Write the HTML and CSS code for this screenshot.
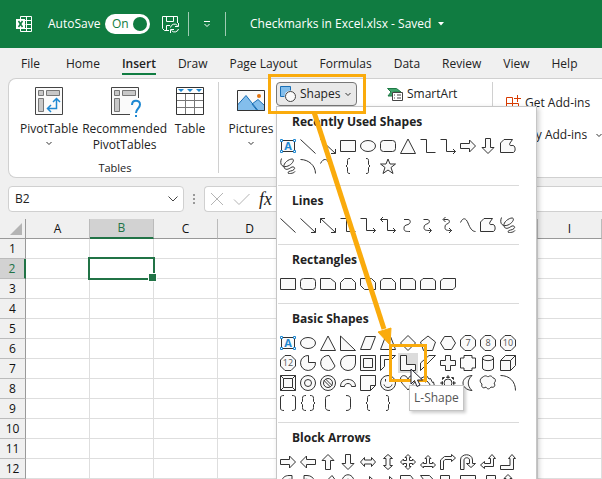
FILE: index.html
```
<!DOCTYPE html>
<html lang="en">
<head>
	<meta charset="UTF-8">
	<meta name="viewport" content="width=device-width, initial-scale=1.0">
	<title>Checkmarks in Excel.xlsx</title>
	<link rel="stylesheet" href="styles.css">
</head>
<body>
	<header class="titlebar">
		<svg class="logo" viewBox="0 0 16 16"><path d="M4.500 3.500V.5h11v15h-11v-3M4.500 4.500h11M9.500 8.500h6M4.500 12.500h11M10.500.5v15" fill="none" stroke="#fff"/><rect y="3" width="9" height="10" fill="#fff"/><path d="M2.500 5l4 6M6.500 5l-4 6" stroke="#107c41" stroke-width="1.500"/></svg>
		<label class="autosave" for="autosave">AutoSave</label>
		<span class="toggle">
			<input type="checkbox" id="autosave" checked>
			<span class="toggle-text">On</span>
		</span>
		<button class="title-btn save" aria-label="Save"><svg viewBox="0 0 17 17"><path d="M7 14.500H2.500l-2-2V.5h15V7M4.500.5v5h7v-5M4.500 14.500v-5H8M8.500 11.500a4 4 0 0 1 7-2M16.500 7v3.500H13M16.500 13a4 4 0 0 1-7 1.500M8.500 17v-3.500H12"/></svg></button>
		<span class="title-sep"></span>
		<button class="title-btn more" aria-label="Customize Quick Access Toolbar"><svg viewBox="0 0 8 8"><path d="M1 1.500h6M1.500 4L4 6.500 6.500 4"/></svg></button>
		<span class="title-sep"></span>
		<span class="filename">Checkmarks in Excel.xlsx - Saved</span>
		<svg class="caret" viewBox="0 0 6 4"><path d="M0 0h6L3 3.500z" fill="#fff"/></svg>
	</header>

	<nav class="tabs">
		<a href="#" class="file">File</a>
		<a href="#">Home</a>
		<a href="#" class="active">Insert</a>
		<a href="#">Draw</a>
		<a href="#">Page Layout</a>
		<a href="#">Formulas</a>
		<a href="#">Data</a>
		<a href="#">Review</a>
		<a href="#">View</a>
		<a href="#">Help</a>
	</nav>

	<section class="ribbon">
		<div class="group tables">
			<div class="group-items">
				<button class="big-btn">
					<svg viewBox="0 0 28 28"><path d="M.5.5h27v27H.5z" fill="#fafafa" stroke="#444"/><path d="M3.500 3.500h5v5h-5zM11.500 3.500h13v5h-13zM3.500 11.500h5v13h-5z" fill="#c8c8c8" stroke="#777"/><path d="M21.500 12v9.500H13M18 15l3.500-3.500L25 15M16 18l-3.500 3.500L16 25" fill="none" stroke="#1e88d2" stroke-width="1.500"/></svg>
					<span>PivotTable</span>
					<svg class="chev" viewBox="0 0 8 5"><path d="M1.500 1L4 3.500 6.500 1"/></svg>
				</button>
				<button class="big-btn">
					<svg viewBox="0 0 28 28"><path d="M19 27.500H.5V.5h27V11" fill="#fafafa" stroke="#444"/><path d="M3.500 3.500h5v5h-5zM11.500 3.500h13v5h-13zM3.500 11.500h5v13h-5z" fill="#c8c8c8" stroke="#777"/><path d="M21 18c0-6 8-5.500 8-.5 0 4-4 4-4 8.500M25 28v2" fill="none" stroke="#1e88d2" stroke-width="2"/></svg>
					<span>Recommended<br>PivotTables</span>
				</button>
				<button class="big-btn">
					<svg viewBox="0 0 28 28"><path d="M.5.5h27v27H.5z" fill="#fff"/><path d="M.5 13.500h27M.5 20.500h27M9.500 7v20M18.500 7v20" stroke="#777"/><path d="M.5.5h27v27H.5zM.5 6.500h27" fill="none" stroke="#333"/><path d="M2 2h6L5 5zM11 2h6l-3 3zM20 2h6l-3 3z" fill="#1e88d2"/></svg>
					<span>Table</span>
				</button>
			</div>
			<div class="group-name">Tables</div>
		</div>

		<div class="group illustrations">
			<button class="big-btn">
				<svg viewBox="0 0 28 28"><path d="M.5 3.500h27v20H.5z" fill="#fafafa"/><path d="M.5 18L9 8.500 21 23.500H.500zM15 17l6-4.500 6.500 6v5H20z" fill="#83beec" stroke="#1a6fb5"/><circle cx="22" cy="9" r="2" fill="#e3730c"/><path d="M.5 3.500h27v20H.5z" fill="none" stroke="#333"/></svg>
				<span>Pictures</span>
				<svg class="chev" viewBox="0 0 8 5"><path d="M1.500 1L4 3.500 6.500 1"/></svg>
			</button>

			<div class="shapes">
				<button class="shapes-btn">
					<svg class="shapes-icon" viewBox="0 0 16 16"><path d="M.5.5h10v10H.5z" fill="#83beec" stroke="#1a6fb5"/><circle cx="10.500" cy="10.500" r="6" fill="#e9e9e9"/><circle cx="10.500" cy="10.500" r="5" fill="#fafafa" stroke="#444"/></svg>
					Shapes
					<svg class="chev" viewBox="0 0 8 5"><path d="M1.500 1L4 3.500 6.500 1"/></svg>
				</button>

				<div class="menu">
					<section>
						<h3>Recently Used Shapes</h3>
						<div class="shape-grid">
							<button><svg viewBox="0 0 16 16"><use href="#textbox"/></svg></button>
							<button><svg viewBox="0 0 16 16"><path d="M.5 1.500l15 14"/></svg></button>
							<button><svg viewBox="0 0 16 16"><path d="M.5 1.500l15 14M15.500 11v4.500H11"/></svg></button>
							<button><svg viewBox="0 0 16 16"><path d="M.5 2.500h15v11H.5z"/></svg></button>
							<button><svg viewBox="0 0 16 16"><ellipse cx="8" cy="8" rx="7.500" ry="5.500"/></svg></button>
							<button><svg viewBox="0 0 16 16"><rect x=".5" y="2.500" width="15" height="11" rx="3"/></svg></button>
							<button><svg viewBox="0 0 16 16"><path d="M8 1l7.500 14.500H.5z"/></svg></button>
							<button><svg viewBox="0 0 16 16"><path class="open" d="M.5 1.500h6v13h9"/></svg></button>
							<button><svg viewBox="0 0 16 16"><path class="open" d="M.5 1.500h6v12h9M13 11l2.500 2.500L13 16"/></svg></button>
							<button><svg viewBox="0 0 16 16"><use href="#right"/></svg></button>
							<button><svg viewBox="0 0 16 16"><use href="#down"/></svg></button>
							<button><svg viewBox="0 0 16 16"><use href="#freeform"/></svg></button>
							<button><svg viewBox="0 0 16 16"><use href="#scribble"/></svg></button>
							<button><svg viewBox="0 0 16 16"><path class="open" d="M.5 1.500c8 0 15 6 15 14"/></svg></button>
							<button><svg viewBox="0 0 16 16"><path class="open" d="M.5 5.500c3-6 7-5 9 1s3 8 6 8"/></svg></button>
							<button><svg viewBox="0 0 16 16"><path class="open" d="M10 .5c-2 0-2.500.5-2.500 2v4L6 8l1.500 1.500v4c0 1.500.5 2 2.500 2"/></svg></button>
							<button><svg viewBox="0 0 16 16"><path class="open" d="M6 .5c2 0 2.500.5 2.500 2v4L10 8 8.500 9.500v4c0 1.500-.5 2-2.500 2"/></svg></button>
							<button><svg viewBox="0 0 16 16"><path d="M8 1l2 5h5.500L11 9.500l2 6-5-3.500-5 3.500 2-6L.5 6H6z"/></svg></button>
						</div>
					</section>
					<section>
						<h3>Lines</h3>
						<div class="shape-grid">
							<button><svg viewBox="0 0 16 16"><path d="M.5 1.500l15 14"/></svg></button>
							<button><svg viewBox="0 0 16 16"><path d="M.5 1.500l15 14M15.500 11v4.500H11"/></svg></button>
							<button><svg viewBox="0 0 16 16"><path class="open" d="M.5 1.500l15 14M15.500 11v4.500H11M.5 6V1.500H5"/></svg></button>
							<button><svg viewBox="0 0 16 16"><path class="open" d="M.5 1.500h6v13h9"/></svg></button>
							<button><svg viewBox="0 0 16 16"><path class="open" d="M.5 1.500h6v12h9M13 11l2.500 2.500L13 16"/></svg></button>
							<button><svg viewBox="0 0 16 16"><path class="open" d="M.5 2.500h7v11h8M13 11l2.500 2.500L13 16M3 0L.5 2.500 3 5"/></svg></button>
							<button><svg viewBox="0 0 16 16"><path class="open" d="M4 2.500h4c3 0 3 4 0 5s-4 1-4 4 2 3 6 3"/></svg></button>
							<button><svg viewBox="0 0 16 16"><path class="open" d="M3.500 2.500H7c3 0 3 3 1 4s-4 1-4 4 2 3 7 3M9 11l2.500 2.500L9 16"/></svg></button>
							<button><svg viewBox="0 0 16 16"><path class="open" d="M3.500 2.500H7c3 0 3 3 1 4s-3 1-3 4 2 3 7 3M9 11l2.500 2.500L9 16M5.500 0L3 2.500 5.500 5"/></svg></button>
							<button><svg viewBox="0 0 16 16"><path class="open" d="M.5 5.500C3 0 6 1 8 6s4 8.500 7.500 8.500"/></svg></button>
							<button><svg viewBox="0 0 16 16"><use href="#freeform"/></svg></button>
							<button><svg viewBox="0 0 16 16"><use href="#scribble"/></svg></button>
						</div>
					</section>
					<section>
						<h3>Rectangles</h3>
						<div class="shape-grid">
							<button><svg viewBox="0 0 16 16"><path d="M.5 2.500h15v11H.5z"/></svg></button>
							<button><svg viewBox="0 0 16 16"><rect x=".5" y="2.500" width="15" height="11" rx="3"/></svg></button>
							<button><svg viewBox="0 0 16 16"><path d="M.5 2.500h10l5 4v7H.5z"/></svg></button>
							<button><svg viewBox="0 0 16 16"><path d="M4.500 2.500h7l4 4v7H.5v-7z"/></svg></button>
							<button><svg viewBox="0 0 16 16"><path d="M.5 2.500h11l4 4v7h-11l-4-4z"/></svg></button>
							<button><svg viewBox="0 0 16 16"><path d="M3 2.500h8.500l4 4v7H.5V5z"/></svg></button>
							<button><svg viewBox="0 0 16 16"><path d="M.5 2.500H13l2.500 2.500v8.500H.5z"/></svg></button>
							<button><svg viewBox="0 0 16 16"><path d="M3 2.500h10L15.500 5v8.500H.5V5z"/></svg></button>
							<button><svg viewBox="0 0 16 16"><path d="M3 2.500h12.500V11L13 13.500H.5V5z"/></svg></button>
						</div>
					</section>
					<section>
						<h3>Basic Shapes</h3>
						<div class="shape-grid">
							<button><svg viewBox="0 0 16 16"><use href="#textbox"/></svg></button>
							<button><svg viewBox="0 0 16 16"><ellipse cx="8" cy="8" rx="7.500" ry="5.500"/></svg></button>
							<button><svg viewBox="0 0 16 16"><path d="M8 1l7.500 14.500H.5z"/></svg></button>
							<button><svg viewBox="0 0 16 16"><path d="M.5 1l15 14.500H.5z"/></svg></button>
							<button><svg viewBox="0 0 16 16"><path d="M5.500 1.500h10l-5 13H.5z"/></svg></button>
							<button><svg viewBox="0 0 16 16"><path d="M5.500 1.500h5l5 13H.5z"/></svg></button>
							<button><svg viewBox="0 0 16 16"><path d="M8 .5L15.500 8 8 15.500.5 8z"/></svg></button>
							<button><svg viewBox="0 0 16 16"><path d="M8 1l7.500 6-3 8.500h-9L.5 7z"/></svg></button>
							<button><svg viewBox="0 0 16 16"><path d="M4.500 1.500h7L15.500 8l-4 6.500h-7L.5 8z"/></svg></button>
							<button><svg viewBox="0 0 16 16"><use href="#polygon"/><text x="8" y="11">7</text></svg></button>
							<button><svg viewBox="0 0 16 16"><use href="#polygon"/><text x="8" y="11">8</text></svg></button>
							<button><svg viewBox="0 0 16 16"><use href="#polygon"/><text x="8" y="11">10</text></svg></button>

							<button><svg viewBox="0 0 16 16"><use href="#polygon"/><text x="8" y="11">12</text></svg></button>
							<button><svg viewBox="0 0 16 16"><path d="M8.500.5A7.500 7.500 0 1 0 15.500 7.500h-7z"/></svg></button>
							<button><svg viewBox="0 0 16 16"><path d="M9 .5A7.500 7.500 0 1 0 15 11z"/></svg></button>
							<button><svg viewBox="0 0 16 16"><path d="M15.500.5V8A7.500 7.500 0 1 1 8 .5z"/></svg></button>
							<button><svg viewBox="0 0 16 16"><path d="M.5.5h15v15H.5zM3.500 3.500h9v9h-9z"/></svg></button>
							<button><svg viewBox="0 0 16 16"><path d="M.5.5h15l-4 4h-7v7l-4 4z"/></svg></button>
							<button class="selected">
								<svg viewBox="0 0 16 16"><path d="M.5.5h6v9h9v6H.5z"/></svg>
								<span class="highlight"></span>
								<svg class="pointer" viewBox="0 0 14 20"><path d="M1 1v15l3.500-3.500L7 18.500l3-1.500-2.500-5H12.500z"/></svg>
								<span class="tooltip">L-Shape</span>
							</button>
							<button><svg viewBox="0 0 16 16"><path d="M9 .5h6.500l-15 15V8z"/></svg></button>
							<button><svg viewBox="0 0 16 16"><path d="M5.500.5h5v5h5v5h-5v5h-5v-5h-5v-5h5z"/></svg></button>
							<button><svg viewBox="0 0 16 16"><path d="M4 .5h8v2.500h3.500v10H12v2.500H4V13H.5V3H4z" class="plaque"/></svg></button>
							<button><svg viewBox="0 0 16 16"><path d="M2.500 3v10c0 3.500 11 3.500 11 0V3c0-3.500-11-3.500-11 0s11 3.500 11 0"/></svg></button>
							<button><svg viewBox="0 0 16 16"><path d="M.5 5.500l5-5h10v10l-5 5H.5zh10v10M10.500 5.500l5-5"/></svg></button>

							<button><svg viewBox="0 0 16 16"><path d="M.5.5h15v15H.5zM3.500 3.500h9v9h-9zM.5.5l3 3M15.500.5l-3 3M.5 15.500l3-3M15.500 15.500l-3-3"/></svg></button>
							<button><svg viewBox="0 0 16 16"><circle cx="8" cy="8" r="7.500"/><circle cx="8" cy="8" r="3.500"/></svg></button>
							<button><svg viewBox="0 0 16 16"><circle cx="8" cy="8" r="7.500"/><circle cx="8" cy="8" r="4.500"/><path d="M4 5.500l6.500 6.500M5.500 4l6.500 6.500"/></svg></button>
							<button><svg viewBox="0 0 16 16"><path d="M.5 11.500c0-9.500 15-9.500 15 0h-4c0-4-7-4-7 0z"/></svg></button>
							<button><svg viewBox="0 0 16 16"><path d="M.5.5h15v10l-5 5H.5zM10.500 15.500v-5h5"/></svg></button>
							<button><svg viewBox="0 0 16 16"><circle cx="8" cy="8" r="7.500"/><path d="M4 9.500c1 4 7 4 8 0M5.500 4v2.500M10.500 4v2.500"/></svg></button>
							<button><svg viewBox="0 0 16 16"><path d="M8 4c2-5 7.500-4 7.500 0S11 11 8 15C5 11 .5 8 .5 4S6-1 8 4z"/></svg></button>
							<button><svg viewBox="0 0 16 16"><path d="M.5 3.500l6-3L9 4l1.500-.5 2 4 1-.5 2 8.500-7-5 1.500-1L7 6 5.500 7z"/></svg></button>
							<button><svg viewBox="0 0 16 16"><circle cx="8" cy="8" r="4"/><path d="M6.500 2.500L8 .5l1.500 2zM6.500 13.500l1.500 2 1.500-2zM2.500 6.500L.5 8l2 1.500zM13.500 6.500l2 1.500-2 1.500zM2.500 2.500h2l-2 2zM13.500 2.500h-2l2 2zM2.500 13.500h2l-2-2zM13.500 13.500h-2l2-2z"/></svg></button>
							<button><svg viewBox="0 0 16 16"><path d="M12 .5c-12 1-12 14 0 15C7 11 7 5 12 .5z"/></svg></button>
							<button><svg viewBox="0 0 16 16"><path d="M3 2c2-2 4-1 5 0 2-2 4-1 5 1 3 0 3 4 1 5 2 3 0 5-3 4-2 3-4 2-5 0-3 2-5 0-4-3-3-2-2-6 1-7z"/></svg></button>
							<button><svg viewBox="0 0 16 16"><path class="open" d="M.5.5c9 0 15 6 15 15"/></svg></button>

							<button><svg viewBox="0 0 16 16"><path class="open" d="M4 .5C1.500.5.5 1 .5 3v10c0 2 1 2.500 3.500 2.500M12 .5c2.500 0 3.500.5 3.500 2.500v10c0 2-1 2.500-3.500 2.500"/></svg></button>
							<button><svg viewBox="0 0 16 16"><path class="open" d="M6 .5c-2.500 0-3.500.5-3.500 3v3L1 8l1.500 1.500v3c0 2.500 1 3 3.500 3M10 .5c2.500 0 3.500.5 3.500 3v3L15 8l-1.500 1.500v3c0 2.500-1 3-3.500 3"/></svg></button>
							<button><svg viewBox="0 0 16 16"><path class="open" d="M10 .5c-3 0-4.500 1-4.500 3v9c0 2 1.500 3 4.500 3"/></svg></button>
							<button><svg viewBox="0 0 16 16"><path class="open" d="M6 .5c3 0 4.500 1 4.500 3v9c0 2-1.500 3-4.500 3"/></svg></button>
							<button><svg viewBox="0 0 16 16"><path class="open" d="M10 .5c-2 0-2.500.5-2.500 2v4L6 8l1.500 1.500v4c0 1.500.5 2 2.500 2"/></svg></button>
							<button><svg viewBox="0 0 16 16"><path class="open" d="M6 .5c2 0 2.500.5 2.500 2v4L10 8 8.500 9.500v4c0 1.500-.5 2-2.500 2"/></svg></button>
						</div>
					</section>
					<section>
						<h3>Block Arrows</h3>
						<div class="shape-grid">
							<button><svg viewBox="0 0 16 16"><use href="#right"/></svg></button>
							<button><svg viewBox="0 0 16 16"><path d="M.5 8l6-6v3.500h9v5h-9V14z"/></svg></button>
							<button><svg viewBox="0 0 16 16"><path d="M8 .5l6 6h-3.500v9h-5v-9H2z"/></svg></button>
							<button><svg viewBox="0 0 16 16"><use href="#down"/></svg></button>
							<button><svg viewBox="0 0 16 16"><path d="M.5 8l4-4.500v2.500h7V3.500l4 4.500-4 4.500V10h-7v2.500z"/></svg></button>
							<button><svg viewBox="0 0 16 16"><path d="M8 .5l4.500 4H10v7h2.500l-4.500 4-4.500-4H6v-7H3.500z"/></svg></button>
							<button><svg viewBox="0 0 16 16"><path d="M8 .5l3 3H9.500v3h3V5l3 3-3 3V9.500h-3v3H11l-3 3-3-3h1.500v-3h-3V11l-3-3 3-3v1.500h3v-3H5z"/></svg></button>
							<button><svg viewBox="0 0 16 16"><path d="M8 1.500l3 3H9.500v5h3V8l3 3-3 3v-1.500h-9V14l-3-3 3-3v1.500h3v-5H5z"/></svg></button>
							<button><svg viewBox="0 0 16 16"><path d="M.5 15.500V6l4-3.500h7V.5l4 3.500-4 3.500v-2H5L3.500 7v8.500z"/></svg></button>
							<button><svg viewBox="0 0 16 16"><path d="M.5 15.500V6c0-7 12-7 12 0v3.500h3l-4.500 4-4.500-4h3V6c0-3-5.500-3-5.500 0v9.500z"/></svg></button>
							<button><svg viewBox="0 0 16 16"><path d="M12 .5l3.500 4h-2v8h-9v2L.5 11l4-3.500v2h6v-5h-2z"/></svg></button>
							<button><svg viewBox="0 0 16 16"><path d="M12 .5l3.500 4h-2v11H.5v-4h9.500v-7H8.500z"/></svg></button>

							<button><svg viewBox="0 0 16 16"><path d="M12 1.500h-3c-8 0-10 9-3 13v-4c-3-3 0-6 6-5z"/></svg></button>
							<button><svg viewBox="0 0 16 16"><path d="M4 1.500h3c8 0 10 9 3 13v-4c3-3 0-6-6-5z"/></svg></button>
							<button><svg viewBox="0 0 16 16"><path d="M12 1.500l3 4h-2v10H2v-3h8v-7H8z"/></svg></button>
							<button><svg viewBox="0 0 16 16"><path d="M2 15C-2-4 18-4 14 15h-3C13 2 3 2 5 15z"/></svg></button>
							<button><svg viewBox="0 0 16 16"><path d="M.5 6h9V2.500l6 5.500-6 6v-4h-9z"/></svg></button>
							<button><svg viewBox="0 0 16 16"><path d="M.5 6h9V2.500l6 5.500-6 6v-4h-9z"/></svg></button>
							<button><svg viewBox="0 0 16 16"><path d="M.5 1.500h10L15.500 8l-5 6.500H.5z"/></svg></button>
							<button><svg viewBox="0 0 16 16"><path d="M.5 1.500h9L15.500 8l-6 6.500h-9l5-6.500z"/></svg></button>
							<button><svg viewBox="0 0 16 16"><path d="M.5 1.500h9V6h6v4h-6v5.500h-9z"/></svg></button>
							<button><svg viewBox="0 0 16 16"><path d="M.5 1.500h15v8H10v6H6v-6H.5z"/></svg></button>
							<button><svg viewBox="0 0 16 16"><path d="M6.500 1.500h9v14h-9V10h-6V6h6z"/></svg></button>
							<button><svg viewBox="0 0 16 16"><path d="M8 .5l4 4h-2v4h5.500v7H.5v-7H6v-4H4z"/></svg></button>
						</div>
					</section>
				</div>

				<span class="highlight"></span>
				<svg class="guide" viewBox="0 0 80 236"><path d="M2 4l70 217" stroke-width="5"/><path d="M66 224l13-4-1 17z"/></svg>
			</div>

			<button class="small-btn smartart">
				<svg viewBox="0 0 16 14"><path d="M.5 1.500h9L14 5H6.500v4H1l3-4z" fill="#3fa36b" stroke="#1e7a45"/><path d="M5.500 5.500h10v8h-10z" fill="#fff" stroke="#444"/><path d="M7 8h1M10 8h4M7 11h1M10 11h4" stroke="#444"/></svg>
				SmartArt
			</button>
		</div>

		<div class="group addins">
			<button class="small-btn">
				<svg viewBox="0 0 16 16"><path d="M7.500 8.500v-6h-6v12h12v-6zM1.500 8.500h6v6M12.500 0v7M9 3.500h7" fill="none" stroke="#d83b01"/></svg>
				Get Add-ins
			</button>
			<button class="small-btn">
				<svg viewBox="0 0 16 16"><path d="M8 1l7 4v6l-7 4-7-4V5z" fill="none" stroke="#d83b01"/></svg>
				My Add-ins
				<svg class="chev" viewBox="0 0 8 5"><path d="M1.500 1L4 3.500 6.500 1"/></svg>
			</button>
		</div>
	</section>

	<div class="formula-row">
		<div class="name-box">
			<input type="text" value="B2" aria-label="Name Box">
			<button aria-label="Open name list"><svg viewBox="0 0 12 8"><path d="M1.500 1.500L6 6l4.500-4.500"/></svg></button>
		</div>
		<span class="dots"><i></i><i></i><i></i></span>
		<div class="formula-box">
			<button aria-label="Cancel"><svg viewBox="0 0 16 16"><path d="M2 2l12 12M14 2L2 14"/></svg></button>
			<button aria-label="Enter"><svg viewBox="0 0 16 16"><path d="M0 8.500l5 5L15.500 3"/></svg></button>
			<button class="fx" aria-label="Insert function">fx</button>
			<input type="text" aria-label="Formula bar">
		</div>
	</div>

	<table class="sheet">
		<thead>
			<tr><th class="corner"></th><th>A</th><th class="current">B</th><th>C</th><th>D</th><th>E</th><th>F</th><th>G</th><th>H</th><th>I</th></tr>
		</thead>
		<tbody>
			<tr><th>1</th><td></td><td></td><td></td><td></td><td></td><td></td><td></td><td></td><td></td></tr>
			<tr><th class="current">2</th><td></td><td class="active-cell"></td><td></td><td></td><td></td><td></td><td></td><td></td><td></td></tr>
			<tr><th>3</th><td></td><td></td><td></td><td></td><td></td><td></td><td></td><td></td><td></td></tr>
			<tr><th>4</th><td></td><td></td><td></td><td></td><td></td><td></td><td></td><td></td><td></td></tr>
			<tr><th>5</th><td></td><td></td><td></td><td></td><td></td><td></td><td></td><td></td><td></td></tr>
			<tr><th>6</th><td></td><td></td><td></td><td></td><td></td><td></td><td></td><td></td><td></td></tr>
			<tr><th>7</th><td></td><td></td><td></td><td></td><td></td><td></td><td></td><td></td><td></td></tr>
			<tr><th>8</th><td></td><td></td><td></td><td></td><td></td><td></td><td></td><td></td><td></td></tr>
			<tr><th>9</th><td></td><td></td><td></td><td></td><td></td><td></td><td></td><td></td><td></td></tr>
			<tr><th>10</th><td></td><td></td><td></td><td></td><td></td><td></td><td></td><td></td><td></td></tr>
			<tr><th>11</th><td></td><td></td><td></td><td></td><td></td><td></td><td></td><td></td><td></td></tr>
			<tr><th>12</th><td></td><td></td><td></td><td></td><td></td><td></td><td></td><td></td><td></td></tr>
		</tbody>
	</table>

	<!-- shapes that the menu uses more than once -->
	<svg class="defs">
		<symbol id="textbox" viewBox="0 0 16 16"><path d="M1.500 2.500h13v11h-13z"/><path d="M.5 1.500h2v2h-2zM13.500 1.500h2v2h-2zM.5 12.500h2v2h-2zM13.500 12.500h2v2h-2z" fill="#fff" stroke="#1e88d2"/><text x="8" y="12" class="letter">A</text></symbol>
		<symbol id="right" viewBox="0 0 16 16"><path d="M.5 5.500h9V2l6 6-6 6v-3.500h-9z"/></symbol>
		<symbol id="down" viewBox="0 0 16 16"><path d="M5.500.5v9H2l6 6 6-6h-3.500v-9z"/></symbol>
		<symbol id="freeform" viewBox="0 0 16 16"><path d="M4 1.500h8.500L10 5c-1 2 0 3 2 2.500 4-1 4 7 1 7H.5V5z"/></symbol>
		<symbol id="scribble" viewBox="0 0 16 16"><path class="open" d="M1.500.5C-1 7 3 10 8 8s7-7 4-7-9 4-8 8 5 2 7 .5 5 0 3 2-5 1-6 3 6 1 7-1"/></symbol>
		<symbol id="polygon" viewBox="0 0 16 16"><path d="M5 .5h6L15.500 5v6L11 15.500H5L.5 11V5z"/></symbol>
	</svg>
</body>
</html>
```

FILE: styles.css
```
* {
	box-sizing: border-box;
}
body {
	margin: 0;
	min-height: 100vh;
	overflow: hidden;
	background-color: #f0f0f0;
	color: #222;
	font-family: 'Open Sans', 'Noto Sans', sans-serif;
	font-size: 12px;
	line-height: 16px;
}
button, input {
	margin: 0;
	padding: 0;
	border: none;
	background: none;
	color: inherit;
	font: inherit;
}
svg {
	display: block;
	flex: none;
	overflow: visible;
}
.defs {
	position: absolute;
	width: 0;
	height: 0;
}

/* title bar */
.titlebar {
	display: flex;
	align-items: center;
	height: 48px;
	padding-left: 16px;
	background-color: #107c41;
	color: #fff;
	white-space: nowrap;
}
.logo {
	width: 16px;
	height: 16px;
	margin-right: 16px;
}
.autosave {
	width: 57px;
}
.toggle {
	display: flex;
	position: relative;
	margin-right: 12px;
}
.toggle input {
	appearance: none;
	display: flex;
	justify-content: flex-end;
	align-items: center;
	width: 45px;
	height: 20px;
	padding-right: 3px;
	border-radius: 10px;
	background-color: #fff;
}
.toggle input::after {
	content: '';
	width: 14px;
	height: 14px;
	border-radius: 50%;
	background-color: #107c41;
}
.toggle-text {
	position: absolute;
	left: 7px;
	top: 2px;
	color: #107c41;
	pointer-events: none;
}
.title-btn svg {
	fill: none;
	stroke: #fff;
}
.save svg {
	width: 17px;
	height: 17px;
}
.title-sep {
	width: 1px;
	height: 24px;
	margin: 0 14px 0 9px;
	background-color: #9fcbb3;
}
.more {
	margin-right: 5px;
}
.more svg {
	width: 8px;
	height: 8px;
}
.filename {
	margin-left: 10px;
}
.caret {
	width: 6px;
	height: 4px;
	margin-left: 7px;
}

/* tabs */
.tabs {
	display: flex;
	gap: 22px;
	height: 30px;
	padding: 7px 0 0 21px;
	white-space: nowrap;
}
.tabs a {
	height: 20px;
	color: #222;
	line-height: 17px;
	text-decoration: none;
}
.tabs .file {
	margin-right: 4px;
}
.tabs .active {
	border-bottom: 2px solid #107c41;
	font-weight: 600;
}

/* ribbon */
.ribbon {
	display: flex;
	height: 100px;
	margin-left: 8px;
	padding: 3px 0 4px;
	border: 1px solid #d0d0d0;
	border-right: none;
	border-radius: 8px 0 0 8px;
	background-color: #fff;
	white-space: nowrap;
}
.group {
	display: flex;
	flex: none;
	border-right: 1px solid #d0d0d0;
}
.tables {
	flex-direction: column;
	justify-content: space-between;
	width: 210px;
	padding-left: 11px;
}
.group-items {
	display: flex;
	gap: 4px;
}
.group-name {
	padding-right: 8px;
	font-size: 11px;
	line-height: 11px;
	text-align: center;
}
.big-btn {
	display: flex;
	flex-direction: column;
	align-items: center;
	align-self: flex-start;
	min-width: 38px;
	padding-top: 5px;
}
.big-btn svg {
	width: 28px;
	height: 28px;
	margin-bottom: 6px;
}
.chev, .big-btn .chev, .small-btn .chev {
	width: 8px;
	height: 5px;
	margin: 4px 0 0;
	fill: none;
	stroke: #333;
}
.illustrations {
	align-items: flex-start;
	width: 274px;
	padding-left: 8px;
}
.illustrations .big-btn {
	width: 48px;
	margin-right: 1px;
}
.shapes {
	position: relative;
}
.shapes-btn {
	display: flex;
	align-items: center;
	gap: 4px;
	width: 81px;
	height: 24px;
	padding-left: 3px;
	border: 1px solid #777;
	border-radius: 4px;
	background-color: #e9e9e9;
}
.shapes-btn .chev, .small-btn .chev {
	margin: 0;
}
.shapes-icon {
	width: 16px;
	height: 16px;
}
.small-btn {
	display: flex;
	align-items: center;
	gap: 4px;
	height: 24px;
}
.small-btn svg {
	width: 16px;
	height: 16px;
}
.smartart {
	margin-left: 30px;
}
.addins {
	flex-direction: column;
	align-items: flex-start;
	gap: 8px;
	padding: 9px 12px 0;
	border: none;
}
.addins .chev {
	margin-left: 4px;
}

/* shapes menu */
.menu {
	position: absolute;
	left: 0;
	top: 100%;
	z-index: 2;
	width: 261px;
	padding-left: 1px;
	border: 1px solid #c6c6c6;
	background-color: #fff;
	box-shadow: 2px 2px 5px rgba(0, 0, 0, 0.2);
}
.menu section {
	width: 241px;
	padding-bottom: 9px;
}
.menu section + section {
	border-top: 1px solid #dadada;
}
.menu h3 {
	margin: 0;
	padding-left: 14px;
	font-size: 12px;
	font-weight: 700;
	line-height: 29px;
}
.shape-grid {
	display: grid;
	grid-template-columns: repeat(12, 20px);
	grid-auto-rows: 20px;
}
.shape-grid button {
	display: flex;
	justify-content: center;
	align-items: center;
	position: relative;
}
.shape-grid svg {
	width: 16px;
	height: 16px;
	fill: #fafafa;
	stroke: #333;
}
.shape-grid .open {
	fill: none;
}
.shape-grid .plaque {
	stroke-linejoin: round;
}
.shape-grid text {
	fill: #555;
	stroke: none;
	font-size: 9px;
	text-anchor: middle;
}
.letter {
	fill: #1e88d2;
	stroke: none;
	font-size: 11px;
	font-weight: 700;
	text-anchor: middle;
}
.shape-grid .selected {
	z-index: 4;
	background-color: #dcdcdc;
}

/* callouts over the menu */
.highlight {
	position: absolute;
	inset: -8px -9px -8px -8px;
	z-index: 3;
	border: 3px solid #faab0c;
	pointer-events: none;
}
.selected .highlight {
	inset: -9px;
}
.guide {
	position: absolute;
	left: 36px;
	top: 26px;
	z-index: 3;
	width: 80px;
	height: 236px;
	fill: #faab0c;
	stroke: #faab0c;
	pointer-events: none;
}
.shape-grid .pointer {
	position: absolute;
	left: 12px;
	top: 15px;
	z-index: 4;
	width: 14px;
	height: 20px;
	fill: #fff;
	stroke: #223;
}
.tooltip {
	position: absolute;
	left: 11px;
	top: 32px;
	z-index: 3;
	padding: 4px 4px;
	border: 1px solid #c4c4c4;
	background-color: #fff;
	box-shadow: 2px 2px 3px rgba(0, 0, 0, 0.2);
	color: #555;
}

/* formula bar */
.formula-row {
	display: flex;
	padding: 8px 0 7px 8px;
}
.name-box, .formula-box {
	display: flex;
	align-items: center;
	height: 26px;
	border: 1px solid #d0d0d0;
	border-radius: 4px;
	background-color: #fff;
}
.name-box {
	width: 176px;
	padding: 0 4px 0 6px;
}
.name-box input, .formula-box input {
	flex: 1;
	min-width: 0;
}
.name-box svg {
	width: 12px;
	height: 8px;
	fill: none;
	stroke: #444;
}
.dots {
	display: flex;
	flex-direction: column;
	justify-content: center;
	align-items: center;
	gap: 2px;
	width: 20px;
}
.dots i {
	width: 2px;
	height: 2px;
	background-color: #999;
}
.formula-box {
	flex: 1;
	gap: 9px;
	padding-left: 4px;
	border-right: none;
	border-radius: 4px 0 0 4px;
}
.formula-box svg {
	width: 16px;
	height: 16px;
	fill: none;
	stroke: #b4b4b4;
}
.fx {
	font-family: 'Liberation Serif', serif;
	font-size: 18px;
	font-style: italic;
}

/* sheet */
.sheet {
	width: 100%;
	table-layout: fixed;
	border-spacing: 0;
	background-color: #fff;
}
.sheet th, .sheet td {
	height: 20px;
	padding: 0;
	border-right: 1px solid #dedede;
	border-bottom: 1px solid #dedede;
}
.sheet th {
	border-color: #bbb;
	background-color: #f0f0f0;
	color: #111;
	font-weight: 400;
	line-height: 18px;
}
.sheet thead th {
	border-bottom-color: #999;
}
.sheet tbody th, .sheet .corner {
	width: 26px;
	border-right-color: #999;
}
.corner::after {
	content: '';
	display: block;
	margin-left: 10px;
	border-left: 12px solid transparent;
	border-bottom: 12px solid #b4b4b4;
	width: 0;
}
.sheet .current {
	background-color: #d2d2d2;
	color: #217346;
}
.sheet thead .current {
	border-bottom: 2px solid #217346;
}
.sheet tbody .current {
	border-right: 2px solid #217346;
}
.active-cell {
	position: relative;
}
.active-cell::before {
	content: '';
	position: absolute;
	inset: -2px;
	border: 2px solid #217346;
}
.active-cell::after {
	content: '';
	position: absolute;
	right: -4px;
	bottom: -4px;
	width: 7px;
	height: 7px;
	border: 1px solid #fff;
	background-color: #217346;
}
```
